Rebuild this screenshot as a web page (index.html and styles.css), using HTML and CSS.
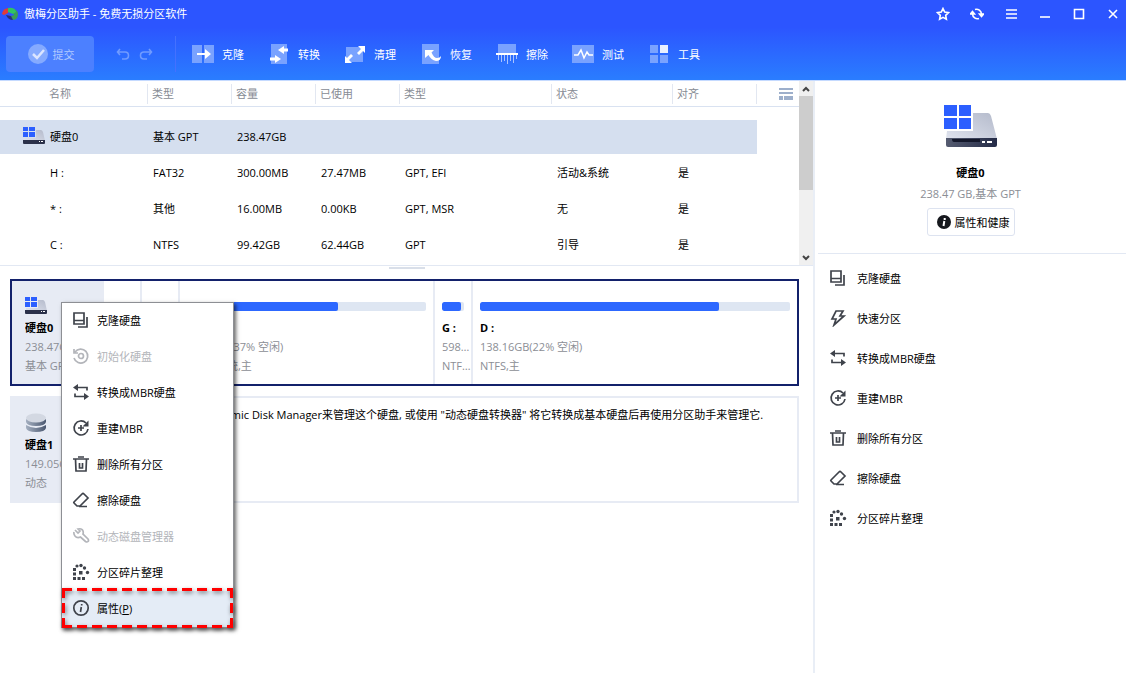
FILE: index.html
```html
<!DOCTYPE html>
<html lang="zh-CN">
<head>
  <meta charset="UTF-8" />
  <meta name="viewport" content="width=device-width, initial-scale=1.0"/>
  <title>傲梅分区助手 - 免费无损分区软件</title>
  <link rel="stylesheet" href="styles.css">
</head>
<body>

  <!-- shared icons -->
  <svg class="sprite" aria-hidden="true">
    <defs>
      <linearGradient id="lid" x1="0" y1="1" x2="1" y2="0">
        <stop offset="0" stop-color="#dfe3ee"/>
        <stop offset="1" stop-color="#b4bacb"/>
      </linearGradient>
      <linearGradient id="base" x1="0" y1="0" x2="1" y2="0">
        <stop offset="0" stop-color="#555b70"/>
        <stop offset="1" stop-color="#252c48"/>
      </linearGradient>
      <linearGradient id="layer" x1="0" y1="0" x2="1" y2="0">
        <stop offset="0" stop-color="#a4afc0"/>
        <stop offset="1" stop-color="#4b5870"/>
      </linearGradient>
    </defs>
    <symbol id="i-disk" viewBox="0 0 54 44">
      <path fill="url(#lid)" d="M29 9h15q2 0 3 3l6 23H2l1-8h26z"/>
      <path fill="url(#base)" d="M2 34h51v7q0 2-2 2H4q-2 0-2-2z"/>
      <path fill="#14182b" d="M8 35h28v3H10q-2 0-2-3z"/>
      <path fill="#fff" d="M38 37h3v2h-3zM43 37h5v2h-5z"/>
      <path fill="#2c5fff" d="M0 1h13v11H0zM15 1h12v11H15zM0 14h13v11H0zM15 14h12v11H15z"/>
    </symbol>
    <symbol id="i-disk-small" viewBox="0 0 22 20">
      <path fill="url(#lid)" d="M13 4h5q1 0 2 2l2 9H1v-3h12z"/>
      <path fill="#2b314a" d="M0 14h22v3q0 1-1 1H1q-1 0-1-1z"/>
      <path fill="#fff" d="M16 15h1v1h-1zM18 15h2v1h-2z"/>
      <path fill="#2c5fff" d="M0 1h5v4H0zM6 1h6v4H6zM0 6h5v5H0zM6 6h6v5H6z"/>
    </symbol>
    <symbol id="i-stack" viewBox="0 0 22 20">
      <path fill="url(#layer)" d="M1 12q10 6 20 0v3q-1 4-10 4T1 15z"/>
      <path fill="url(#layer)" d="M1 6q10 6 20 0v3q-1 4-10 4T1 9z"/>
      <ellipse cx="11" cy="5" rx="10" ry="4.500" fill="#d3d8e2"/>
    </symbol>
    <symbol id="i-clone" viewBox="0 0 18 18">
      <path d="M2 2h10v11H2zM2 9.500h10M15 6v10H6"/>
    </symbol>
    <symbol id="i-init" viewBox="0 0 18 18">
      <path d="M3 5a7 7 0 1 1-1 6M2 2v4h4"/><circle cx="9" cy="9" r="2.500"/>
    </symbol>
    <symbol id="i-convert" viewBox="0 0 18 18">
      <path d="M3 4.500h12v3M3 10.500v3h12"/><path class="solid" d="M1 4.500 6 1v7zM17 13.500 12 10v7z"/>
    </symbol>
    <symbol id="i-rebuild" viewBox="0 0 18 18">
      <path d="M14 4a7 7 0 1 0 2 6M9 6v6M6 9h6"/><path class="solid" d="M16.500 1.500v6h-6z"/>
    </symbol>
    <symbol id="i-trash" viewBox="0 0 18 18">
      <path d="M1 4h16M6 2h6M3.500 4l.5 12h10l.5-12M7.500 8v5h3V8"/>
    </symbol>
    <symbol id="i-erase" viewBox="0 0 18 18">
      <path d="M2 11l8-8q1-1 2 0l4 4-8 8H5l-3-3q-.5-.5 0-1zM12 3l4 4M7 15.500h8"/>
    </symbol>
    <symbol id="i-wrench" viewBox="0 0 18 18">
      <path d="M3 3l3 3 2-2-2-2q4-1 5 2 .5 2 0 3l5 5q1 1.500 0 2.500t-2.500 0L8.500 10Q5 11.500 3 9 1.500 7 2 5"/>
    </symbol>
    <symbol id="i-defrag" viewBox="0 0 18 18">
      <path class="solid" d="M1 5h3v3H1zM1 9.500h3v3H1zM1 14h3v3H1zM5.500 14h3v3h-3zM10 14h3v3h-3zM7 8h3.500v3.500H7z"/>
      <circle class="solid" cx="5" cy="3" r="1.600"/><circle class="solid" cx="9" cy="2.500" r="1.700"/>
      <circle class="solid" cx="12.500" cy="5" r="1.700"/><circle class="solid" cx="15.500" cy="9.500" r="1.700"/>
    </symbol>
    <symbol id="i-bolt" viewBox="0 0 18 18">
      <path d="M7 2h7l-3 5h4L5 16l2-6H3z"/>
    </symbol>
    <symbol id="i-info" viewBox="0 0 18 18">
      <circle cx="9" cy="9" r="7.200"/><path d="M9.700 5v1.500M9.300 8l-.8 5"/>
    </symbol>
  </svg>

  <header class="header">
    <div class="titlebar">
      <svg class="logo" viewBox="0 0 17 14">
        <path fill="#3a9c57" d="M9 2q7 0 7 5t-4 6q-3-1-3-4l3-1z"/>
        <path fill="#e23b38" d="M0 7Q1 1 7 1L6 6 2 8z"/>
        <path fill="#2fc463" d="M6 1q7-1 8 4l-3 2-5-2z"/>
        <path fill="#2b2f7b" d="M4 8l5 1 2 4q-5 0-7-5z"/>
      </svg>
      <h1>傲梅分区助手 - 免费无损分区软件</h1>
      <div class="window-buttons">
        <button type="button" aria-label="收藏"><svg viewBox="0 0 14 14"><path d="M7 1.500l1.700 3.600 3.800.5-2.800 2.700.7 4L7 10.400l-3.400 1.900.7-4-2.800-2.700 3.800-.5z"/></svg></button>
        <button type="button" aria-label="刷新"><svg viewBox="0 0 14 14"><path d="M5 2.500a5 5 0 0 1 6.500 4.500M9 11.500A5 5 0 0 1 2.500 7"/><path fill="#fff" d="M9.500 7h4l-2 2.500zM.5 7h4l-2-2.500z"/></svg></button>
        <button type="button" aria-label="菜单"><svg viewBox="0 0 14 14"><path d="M2 3h11M2 7h11M2 11h11"/></svg></button>
        <button type="button" aria-label="最小化"><svg viewBox="0 0 14 14"><path d="M2 10h10"/></svg></button>
        <button type="button" aria-label="最大化"><svg viewBox="0 0 14 14"><path d="M2.500 2.500h9v9h-9z"/></svg></button>
        <button type="button" aria-label="关闭"><svg viewBox="0 0 14 14"><path d="M3 3l8 8M11 3l-8 8"/></svg></button>
      </div>
    </div>

    <nav class="toolbar">
      <button type="button" class="submit">
        <svg viewBox="0 0 20 20"><circle cx="10" cy="10" r="10" fill="#85aaff"/><path d="M5 10l4 4 7-8" fill="none" stroke="#dbe5ff" stroke-width="2.500"/></svg>
        提交
      </button>
      <div class="history">
        <button type="button" aria-label="撤销"><svg viewBox="0 0 14 12"><path d="M4 1 1.500 4 4 7M2 4h7q3.500 0 3.500 3.500T9 11H6"/></svg></button>
        <button type="button" aria-label="重做"><svg viewBox="0 0 14 12"><path d="M10 1l2.500 3L10 7M12 4H5Q1.500 4 1.500 7.500T5 11h3"/></svg></button>
      </div>
      <div class="tools">
        <button type="button"><svg viewBox="0 0 22 20"><path class="pane" d="M0 1h10v18H0zM12 1h10v18H12z"/><path fill="#fff" d="M5 9h8V5l6 5-6 5v-4H5z"/></svg>克隆</button>
        <button type="button"><svg viewBox="0 0 22 20"><path class="pane" d="M3 0h16v20H3z"/><path fill="#fff" d="M20 4.500h-4V2l-6 4 6 4V7.500h4zM2 13.500h5V11l6 4-6 4v-2.500H2z"/></svg>转换</button>
        <button type="button"><svg viewBox="0 0 22 20"><path class="pane" d="M2 3h17v15H2z"/><path fill="#fff" d="M14 2h7v7l-2-2-4 4-2-2 4-4zM1 19v-7l2 2 4-4 2 2-4 4 3 3z"/></svg>清理</button>
        <button type="button"><svg viewBox="0 0 22 20"><path class="pane" d="M2 0h17v20H2z"/><path fill="#fff" d="M5 6h9l-2.500 2.500Q14 14 17 14q3 0 4-2 0 5-5 5-5-1-7.500-6L5 14z"/></svg>恢复</button>
        <button type="button"><svg viewBox="0 0 22 20"><path class="pane" d="M2 0h18v9H2z"/><path fill="#fff" d="M0 9h22v2H0z"/><path d="M2.500 11v5M5.500 11v7M8.500 11v6M11.500 11v9M14.500 11v6M17.500 11v8M20.500 11v4" stroke="#a9c4ff"/></svg>擦除</button>
        <button type="button"><svg viewBox="0 0 22 20"><path class="pane" d="M0 1h22v18H0z"/><path d="M2 11h4l3-5 3 8 3-6 2 3h4" fill="none" stroke="#fff" stroke-width="1.500"/></svg>测试</button>
        <button type="button"><svg viewBox="0 0 22 20"><path class="pane" d="M2 1h8v8H2zM2 11h8v8H2zM12 11h8v8h-8z"/><path fill="#e8f0ff" d="M12 1h8v8h-8z"/></svg>工具</button>
      </div>
    </nav>
  </header>

  <div class="layout">
    <main>
      <section class="volumes">
        <table>
          <colgroup>
            <col class="col-name"><col class="col-data"><col class="col-data"><col class="col-data">
            <col class="col-kind"><col class="col-status"><col class="col-data"><col>
          </colgroup>
          <thead>
            <tr>
              <th>名称</th><th>类型</th><th>容量</th><th>已使用</th><th>类型</th><th>状态</th><th>对齐</th>
              <th class="view">
                <button type="button" aria-label="视图"><svg viewBox="0 0 14 12"><path fill="#9dafcb" d="M0 0h14v2H0zM0 4h14v2H0zM0 8h4v4H0zM5 8h9v4H5z"/></svg></button>
              </th>
            </tr>
          </thead>
          <tbody>
            <tr class="selected">
              <td class="disk-name"><div><svg class="disk-icon"><use href="#i-disk-small"/></svg>硬盘0</div></td>
              <td>基本 GPT</td><td>238.47GB</td><td></td><td></td><td></td><td></td><td></td>
            </tr>
            <tr><td>H :</td><td>FAT32</td><td>300.00MB</td><td>27.47MB</td><td>GPT, EFI</td><td>活动&amp;系统</td><td>是</td><td></td></tr>
            <tr><td>* :</td><td>其他</td><td>16.00MB</td><td>0.00KB</td><td>GPT, MSR</td><td>无</td><td>是</td><td></td></tr>
            <tr><td>C :</td><td>NTFS</td><td>99.42GB</td><td>62.44GB</td><td>GPT</td><td>引导</td><td>是</td><td></td></tr>
          </tbody>
        </table>
        <div class="scrollbar">
          <button type="button" aria-label="向上"><svg viewBox="0 0 8 6"><path d="M1 5l3-3 3 3"/></svg></button>
          <div class="thumb"></div>
          <button type="button" aria-label="向下"><svg viewBox="0 0 8 6"><path d="M1 1l3 3 3-3"/></svg></button>
        </div>
      </section>

      <div class="splitter"></div>

      <section class="disks">
        <div class="disk active">
          <div class="disk-info">
            <svg class="disk-icon"><use href="#i-disk-small"/></svg>
            <strong>硬盘0</strong>
            <span>238.47GB</span>
            <span>基本 GPT</span>
          </div>
          <div class="partition small">
            <div class="bar"><div class="fill" style="width: 10%"></div></div>
            <strong>H :</strong><span>300.00MB</span><span>FAT32</span>
          </div>
          <div class="partition small">
            <div class="bar"><div class="fill" style="width: 1%"></div></div>
            <strong>* :</strong><span>16.00MB</span><span>其他</span>
          </div>
          <div class="partition drive-c">
            <div class="bar"><div class="fill" style="width: 63%"></div></div>
            <strong>C :</strong><span>99.42GB(37% 空闲)</span><span>NTFS,系统,主</span>
          </div>
          <div class="partition small">
            <div class="bar"><div class="fill" style="width: 85%"></div></div>
            <strong>G :</strong><span>598.00MB</span><span>NTFS,主</span>
          </div>
          <div class="partition drive-d">
            <div class="bar"><div class="fill" style="width: 77%"></div></div>
            <strong>D :</strong><span>138.16GB(22% 空闲)</span><span>NTFS,主</span>
          </div>
        </div>

        <div class="disk">
          <div class="disk-info">
            <svg class="disk-icon"><use href="#i-stack"/></svg>
            <strong>硬盘1</strong>
            <span>149.05GB</span>
            <span>动态</span>
          </div>
          <p class="notice">您可以通过AOMEI Dynamic Disk Manager来管理这个硬盘, 或使用 "动态硬盘转换器" 将它转换成基本硬盘后再使用分区助手来管理它.</p>
        </div>
      </section>
    </main>

    <aside class="sidebar">
      <div class="summary">
        <svg class="big-disk"><use href="#i-disk"/></svg>
        <strong>硬盘0</strong>
        <span>238.47 GB,基本 GPT</span>
        <button type="button">
          <svg viewBox="0 0 14 14"><circle cx="7" cy="7" r="7" fill="#16181d"/><path d="M7.700 3v2M7.300 6l-.8 5" stroke="#fff" stroke-width="2"/></svg>
          属性和健康
        </button>
      </div>
      <div class="actions">
        <button type="button"><svg class="icon"><use href="#i-clone"/></svg>克隆硬盘</button>
        <button type="button"><svg class="icon"><use href="#i-bolt"/></svg>快速分区</button>
        <button type="button"><svg class="icon"><use href="#i-convert"/></svg>转换成MBR硬盘</button>
        <button type="button"><svg class="icon"><use href="#i-rebuild"/></svg>重建MBR</button>
        <button type="button"><svg class="icon"><use href="#i-trash"/></svg>删除所有分区</button>
        <button type="button"><svg class="icon"><use href="#i-erase"/></svg>擦除硬盘</button>
        <button type="button"><svg class="icon"><use href="#i-defrag"/></svg>分区碎片整理</button>
      </div>
    </aside>
  </div>

  <div class="context-menu">
    <button type="button"><svg class="icon"><use href="#i-clone"/></svg>克隆硬盘</button>
    <button type="button" disabled><svg class="icon"><use href="#i-init"/></svg>初始化硬盘</button>
    <button type="button"><svg class="icon"><use href="#i-convert"/></svg>转换成MBR硬盘</button>
    <button type="button"><svg class="icon"><use href="#i-rebuild"/></svg>重建MBR</button>
    <button type="button"><svg class="icon"><use href="#i-trash"/></svg>删除所有分区</button>
    <button type="button"><svg class="icon"><use href="#i-erase"/></svg>擦除硬盘</button>
    <button type="button" disabled><svg class="icon"><use href="#i-wrench"/></svg>动态磁盘管理器</button>
    <button type="button"><svg class="icon"><use href="#i-defrag"/></svg>分区碎片整理</button>
    <button type="button" class="highlight"><svg class="icon"><use href="#i-info"/></svg><span>属性(<u>P</u>)</span></button>
  </div>

</body>
</html>
```

FILE: styles.css
```css
* {
  box-sizing: border-box;
}

body {
  margin: 0;
  min-height: 100vh;
  display: flex;
  flex-direction: column;
  font-family: "Open Sans", "Noto Sans CJK SC", sans-serif;
  font-size: 11px;
  line-height: 19px;
  color: #000;
  background: #fff;
}

button {
  display: flex;
  align-items: center;
  padding: 0;
  border: none;
  background: none;
  font: inherit;
  color: inherit;
  white-space: nowrap;
}

svg {
  flex: none;
}

.sprite {
  position: absolute;
  width: 0;
  height: 0;
}

.icon {
  width: 18px;
  height: 18px;
  fill: none;
  stroke: #3f434b;
  stroke-width: 1.7;
}

.solid {
  fill: #3f434b;
  stroke: none;
}

/* header */
.header {
  background: linear-gradient(#2c55ff 0, #2c55ff 34%, #2a7dff 100%);
  border-bottom: 1px solid #c5daff;
  color: #fff;
}

.titlebar {
  display: flex;
  align-items: center;
  height: 28px;
  padding-left: 2px;
}

.logo {
  width: 17px;
  height: 14px;
  margin-right: 5px;
}

h1 {
  margin: 0;
  padding-bottom: 2px;
  font-size: 11px;
  font-weight: normal;
}

.window-buttons {
  display: flex;
  gap: 8px;
  margin-left: auto;
}

.window-buttons button {
  width: 26px;
  height: 28px;
  justify-content: center;
}

.window-buttons svg {
  width: 14px;
  height: 14px;
  fill: none;
  stroke: #fff;
  stroke-width: 1.6;
}

.toolbar {
  display: flex;
  align-items: center;
  height: 52px;
  padding-left: 6px;
}

.submit {
  width: 88px;
  height: 36px;
  justify-content: center;
  gap: 5px;
  padding-left: 2px;
  border-radius: 4px;
  background: #4c80ff;
  color: #b3caff;
}

.submit svg {
  width: 20px;
  height: 20px;
}

.history {
  display: flex;
  align-items: center;
  gap: 9px;
  height: 36px;
  padding: 0 22px;
  border-right: 1px solid #4471ff;
}

.history svg {
  width: 14px;
  height: 12px;
  fill: none;
  stroke: #709bff;
  stroke-width: 1.6;
}

.tools {
  display: flex;
  gap: 24px;
  margin-left: 16px;
}

.tools button {
  gap: 8px;
}

.tools svg {
  width: 22px;
  height: 20px;
}

.pane {
  fill: #79a2ff;
}

/* layout */
.layout {
  flex: 1;
  display: flex;
}

main {
  flex: 1;
  min-width: 0;
}

/* volume table */
.volumes {
  display: flex;
  border-bottom: 1px solid #e2e8f3;
}

table {
  flex: 1;
  width: 0;
  table-layout: fixed;
  border-collapse: separate;
  border-spacing: 0;
  margin-bottom: 2px;
}

.col-name {
  width: 148px;
}

.col-data {
  width: 84px;
}

.col-kind {
  width: 152px;
}

.col-status {
  width: 121px;
}

th {
  height: 26px;
  padding: 0 0 0 4px;
  border-bottom: 1px solid #d9e2f1;
  background: linear-gradient(#e2e7f1, #e2e7f1) right center / 1px 20px no-repeat;
  font-weight: normal;
  text-align: left;
  color: #878b94;
}

th:first-child {
  padding-left: 49px;
}

th.view {
  padding: 0 6px 0 0;
  background: none;
}

.view button {
  margin-left: auto;
}

.view svg {
  width: 14px;
  height: 12px;
}

tbody::before {
  content: "";
  display: table-row;
  height: 12px;
}

td {
  height: 36px;
  padding: 0 0 2px 5px;
  border: solid transparent;
  border-width: 1px 0;
  background-clip: padding-box;
  white-space: nowrap;
}

td:first-child {
  padding-left: 50px;
}

td.disk-name {
  padding-left: 23px;
}

.disk-name div {
  display: flex;
  align-items: center;
  gap: 5px;
}

.selected td:not(:last-child) {
  background-color: #d5dfef;
}

.disk-icon {
  width: 22px;
  height: 20px;
}

.scrollbar {
  width: 14px;
  display: flex;
  flex-direction: column;
  background: #f0f0f0;
}

.scrollbar button {
  height: 15px;
  justify-content: center;
}

.scrollbar button:last-child {
  margin-top: auto;
}

.scrollbar svg {
  width: 8px;
  height: 6px;
  fill: none;
  stroke: #444;
  stroke-width: 2;
}

.thumb {
  height: 94px;
  background: #cdcdcd;
}

.splitter {
  height: 13px;
  background: linear-gradient(#d9dfe9, #d9dfe9) center 1px / 36px 2px no-repeat;
}

/* disk map */
.disks {
  display: flex;
  flex-direction: column;
  gap: 10px;
  padding: 0 14px 0 10px;
}

.disk {
  display: flex;
  min-height: 107px;
  border: 2px solid #e7ebf4;
}

.disk.active {
  border-color: #13216b;
}

.disk span,
.disk strong {
  display: block;
  overflow: hidden;
  text-overflow: ellipsis;
  white-space: nowrap;
}

.disk span {
  color: #8b8e95;
}

.disk-info {
  width: 92px;
  padding: 15px 0 0 13px;
  background: #e7ebf4;
}

.disk-info .disk-icon {
  display: block;
  margin-bottom: 2px;
}

.partition {
  min-width: 0;
  padding: 21px 0 0 7px;
  border-right: 2px solid #e7ebf4;
}

.partition:last-child {
  border-right: none;
}

.small {
  flex: 0 0 38px;
}

.drive-c {
  flex: 252;
}

.drive-d {
  flex: 325;
}

.bar {
  height: 9px;
  margin: 0 7px 7px 0;
  border-radius: 2px;
  background: #dee6f2;
  overflow: hidden;
}

.fill {
  height: 100%;
  border-radius: 2px;
  background: #2d68ff;
}

.notice {
  margin: 0;
  padding: 7px 0 0 8px;
  white-space: nowrap;
}

/* sidebar */
.sidebar {
  width: 313px;
  border-left: 2px solid #e9eef6;
  padding-left: 3px;
}

.summary {
  display: flex;
  flex-direction: column;
  align-items: center;
  padding: 23px 3px 17px 0;
  border-bottom: 1px solid #e2e8f3;
}

.big-disk {
  width: 54px;
  height: 44px;
  margin-bottom: 15px;
}

.summary span {
  margin: 2px 0 5px;
  color: #8b8e95;
}

.summary button {
  height: 28px;
  padding: 0 4px 0 9px;
  gap: 4px;
  border: 1px solid #dde3f0;
  border-radius: 3px;
}

.summary button svg {
  width: 14px;
  height: 14px;
}

.actions {
  padding: 4px 0 0 11px;
}

.actions button {
  height: 40px;
  gap: 10px;
}

/* context menu */
.context-menu {
  position: absolute;
  top: 302px;
  left: 61px;
  width: 173px;
  border: 1px solid #8d8f94;
  background: #fff;
  box-shadow: 2px 2px 4px rgba(0, 0, 0, 0.6);
}

.context-menu button {
  width: 100%;
  height: 36px;
  padding: 0 0 2px 10px;
  gap: 7px;
}

.context-menu button:disabled {
  color: #b3b5ba;
}

button:disabled .icon {
  stroke: #b3b5ba;
}

.context-menu .highlight {
  position: relative;
  background: #e4ecf6;
}

/* red dashed frame, drawn with gradients to control the dash length */
.highlight::after {
  content: "";
  position: absolute;
  inset: -3px 0 -1px;
  background:
    repeating-linear-gradient(90deg, #f00 0 10px, transparent 10px 15px) top / 100% 3px no-repeat,
    repeating-linear-gradient(90deg, #f00 0 10px, transparent 10px 15px) bottom / 100% 3px no-repeat,
    repeating-linear-gradient(#f00 0 10px, transparent 10px 15px) left / 3px 100% no-repeat,
    repeating-linear-gradient(#f00 0 10px, transparent 10px 15px) right / 3px 100% no-repeat;
  filter: drop-shadow(1px 2px 2px rgba(0, 0, 0, 0.5));
}
```
